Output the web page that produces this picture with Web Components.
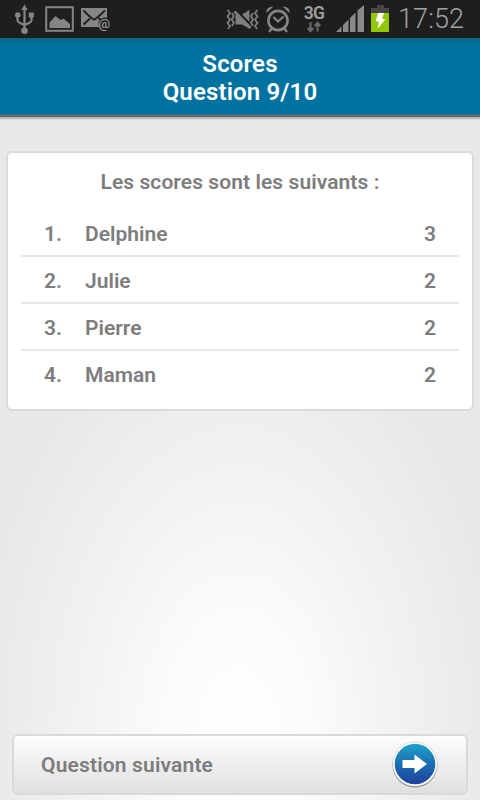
<!DOCTYPE html>
<html lang="fr">
<head>
<meta charset="utf-8">
<title>Scores</title>
<style>
html, body { margin: 0; height: 100%; }
body { font-family: Roboto, "Liberation Sans", sans-serif; overflow: hidden; }
</style>
</head>
<body>
<quiz-screen>
  <status-bar slot="status" time="17:52"></status-bar>
  <title-bar slot="title"><span>Scores</span><span slot="sub">Question 9/10</span></title-bar>
  <score-card>
    <span slot="heading">Les scores sont les suivants :</span>
    <score-row rank="1." points="3">Delphine</score-row>
    <score-row rank="2." points="2">Julie</score-row>
    <score-row rank="3." points="2">Pierre</score-row>
    <score-row rank="4." points="2">Maman</score-row>
  </score-card>
  <next-button slot="footer">Question suivante</next-button>
</quiz-screen>
<script>
class Base extends HTMLElement {
  connectedCallback() {
    if (!this.shadowRoot) this.attachShadow({ mode: 'open' }).innerHTML = this.render();
  }
}

customElements.define('quiz-screen', class extends Base {
  render() {
    return `<style>
      :host { display: flex; flex-direction: column; width: 480px; height: 800px; overflow: hidden;
        background: radial-gradient(ellipse 262px 440px at 238px 740px, #fff 0%, #fbfbfb 28%, #f2f2f2 60%, #e8e8e8 100%); }
      main { flex: 1; padding: 32px 6px 0; }
      footer { padding: 0 12px 5px; }
    </style>
    <slot name="status"></slot><slot name="title"></slot>
    <main><slot></slot></main>
    <footer><slot name="footer"></slot></footer>`;
  }
});

customElements.define('status-bar', class extends Base {
  render() {
    return `<style>
      :host { display: flex; height: 38px; background: #1e1e1e; color: #8b8b8b; }
      svg { display: block; flex: none; }
      .grow { flex: 1; }
      .net { width: 28px; display: flex; flex-direction: column; align-items: center; padding-top: 5px; box-sizing: border-box; margin: 0 6px 0 6px;
        font: 600 17.500px/16px Roboto, sans-serif; color: #a0a0a0; letter-spacing: -.8px; }
      time { font: 300 27px/38px Roboto, sans-serif; color: #a2a2a2; width: 82px; margin-left: 8px; letter-spacing: .1px; }
    </style>
    <svg width="40" height="38" viewBox="0 0 40 38" fill="none" stroke="#858585" stroke-width="2.200">
      <path d="M24.500 8v22M17.500 16v4q0 2 2 2.700l5 2.300M31.500 15v5q0 2-2 2.700l-5 2.300"/>
      <g fill="#858585" stroke="none"><path d="M24.500 4.500l3.200 5.500h-6.400zM28.800 12.500h5v5h-5z"/><circle cx="17.700" cy="15" r="2.800"/><circle cx="24.500" cy="30.800" r="3.300"/></g>
    </svg>
    <svg width="40" height="38" viewBox="40 0 40 38">
      <rect x="46.200" y="7.200" width="26.600" height="23.600" fill="none" stroke="#858585" stroke-width="2"/>
      <path fill="#858585" d="M49.500 28v-5.500l6-6.500 5 4 3-1.500 6.500 5.500v4z"/>
    </svg>
    <svg width="36" height="38" viewBox="80 0 36 38">
      <path fill="#858585" d="M81 8h26v19H81z"/>
      <path fill="none" stroke="#1e1e1e" stroke-width="1.800" d="M83.500 10.500q9 9 10.500 9t11-9M83.500 24.500l6.500-6M104 23l-5.500-5"/>
      <circle cx="105" cy="24" r="6.400" fill="#1e1e1e"/>
      <text x="98.500" y="27.500" font-family="Roboto" font-size="13" font-weight="500" fill="#999">@</text>
    </svg>
    <span class="grow"></span>
    <svg width="38" height="38" viewBox="224 0 38 38" fill="none" stroke="#7e7e7e">
      <path stroke-width="1.800" d="M227.500 10l2.500 3-2.500 3.500 2.500 3-2.500 3.500 2.500 3-2 3M231.800 13l2 3-2 3.500 2 3.500-2 3M257.500 10l-2.500 3 2.500 3.500-2.500 3 2.500 3.500-2.500 3 2 3M253 13l-2 3 2 3.500-2 3.500 2 3"/>
      <path fill="#7e7e7e" stroke="none" d="M235.500 15.500h2.500l12 11v2.500l-8-4.500h-6.500zM242 14.500l7.500-4.500v12z"/>
      <path stroke-width="2.600" d="M234.500 11.500l16 16.500"/>
    </svg>
    <svg width="32" height="38" viewBox="262 0 32 38" fill="none" stroke="#858585">
      <circle cx="278" cy="20.500" r="9.600" stroke-width="2.600"/>
      <path stroke-width="2.200" d="M273.500 17l4.500 4.500 5.500-5M272 28l-3 4M284 28l3 4"/>
      <path fill="#858585" stroke="none" d="M266.500 13q-1-6 7-6.500zM289.500 13q1-6-7-6.500z"/>
    </svg>
    <div class="net">3G
      <svg width="16" height="12" viewBox="306 20 16 12" fill="none" stroke="#6b6b6b" stroke-width="2"><path d="M310.500 21v9M307.700 27l2.800 3.200 2.800-3.200M317.500 30.500v-8.500M314.700 25l2.800-3.200 2.800 3.200"/></svg>
    </div>
    <svg width="34" height="38" viewBox="334 0 34 38" fill="#8a8a8a">
      <path d="M336 32l5.500-5.500V32zM343 32v-7l5.500-5.500V32zM350 32V18l5.500-5.500V32zM357.500 32V10.500L364 5v27z"/>
    </svg>
    <svg width="22" height="38" viewBox="368 0 22 38">
      <path fill="#464646" d="M371 8h6V5h7v3h5v5h-18z"/><path fill="#90c800" d="M371 13h18v19h-18z"/>
      <path fill="#fff" d="M378 13h6l-2 6h3.500l-8 10 1.500-7.500h-3.500z"/>
    </svg>
    <time>${this.getAttribute('time')}</time>`;
  }
});

customElements.define('title-bar', class extends Base {
  render() {
    return `<style>
      :host { display: flex; flex-direction: column; align-items: center; height: 82px; box-sizing: border-box; padding-top: 12px; color: #fff;
        font-size: 24px; font-weight: 600; line-height: 28px; letter-spacing: .15px;
        background: linear-gradient(#10617f 0, #0072a0 5px, #0072a0 76px, #656a78 77px, #656a78 79px, #b4b0aa 79px, #b4b0aa 80px, #d6d2cf 81px, #e6e6e6 82px); }
    </style><slot></slot><slot name="sub"></slot>`;
  }
});

customElements.define('score-card', class extends Base {
  render() {
    return `<style>
      :host { display: block; box-sizing: border-box; height: 260px; border: 2px solid #dadada; border-radius: 6px; background: #fff; background-clip: padding-box;
        color: #7d7d7d; font-size: 21px; font-weight: 600; padding: 0 13px; margin-top: -1px; }
      header { text-align: center; line-height: 28px; padding: 15px 0 14px; letter-spacing: .08px; }
    </style><header><slot name="heading"></slot></header><slot></slot>`;
  }
});

customElements.define('score-row', class extends Base {
  render() {
    return `<style>
      :host { display: flex; height: 47px; box-sizing: border-box; border-bottom: 2px solid #e7e7e7; line-height: 49px; padding: 0 23px; }
      :host(:last-child) { border-color: transparent; }
      .rank { width: 41px; } .name { flex: 1; }
    </style><span class="rank">${this.getAttribute('rank')}</span><span class="name"><slot></slot></span><span>${this.getAttribute('points')}</span>`;
  }
});

customElements.define('next-button', class extends Base {
  render() {
    return `<style>
      :host { display: flex; align-items: center; justify-content: space-between; box-sizing: border-box; height: 61px; border: 2px solid #d9d9d9; border-radius: 6px;
        background: linear-gradient(#fdfdfd, #e0e0e0); color: #7d7d7d; font-size: 21px; font-weight: 600; letter-spacing: .16px; padding: 0 27px 0 27px; }
      svg { display: block; }
    </style><slot></slot>
    <svg width="48" height="48" viewBox="391 741 48 48">
      <defs><linearGradient id="g" x1="0" y1="0" x2="0" y2="1"><stop offset="0" stop-color="#20a3cc"/><stop offset=".5" stop-color="#1b6db2"/><stop offset="1" stop-color="#20419c"/></linearGradient></defs>
      <circle cx="415" cy="765" r="22.500" fill="#858585"/><circle cx="415" cy="764" r="22.500" fill="#d2d2d2"/><circle cx="415" cy="764" r="21.800" fill="#fff"/>
      <circle cx="415" cy="764" r="20.300" fill="url(#g)"/>
      <path fill="#fff" d="M402.500 760h12v-5.500l12.500 9.500-12.500 9.500V768h-12z"/>
    </svg>`;
  }
});
</script>
</body>
</html>
